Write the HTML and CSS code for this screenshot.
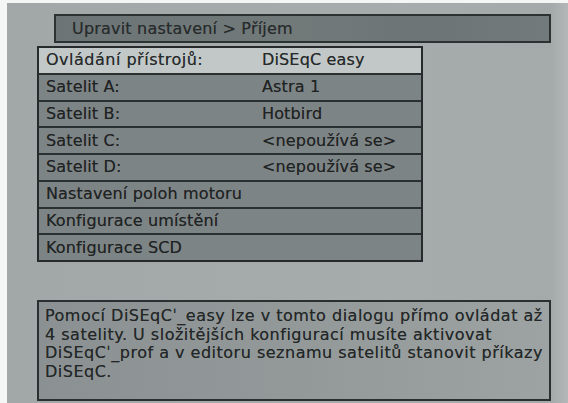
FILE: index.html
```html
<!DOCTYPE html>
<html lang="cs">
<head>
<meta charset="utf-8">
<title>Upravit nastavení &gt; Příjem</title>
<link rel="stylesheet" href="styles.css">
</head>
<body>
<div class="screen">
  <div class="title-bar">Upravit nastavení &gt; Příjem</div>
  <div class="menu">
    <div class="row selected"><span class="label wide">Ovládání přístrojů:</span><span class="value">DiSEqC easy</span></div>
    <div class="row"><span class="label">Satelit A:</span><span class="value">Astra 1</span></div>
    <div class="row"><span class="label">Satelit B:</span><span class="value">Hotbird</span></div>
    <div class="row"><span class="label">Satelit C:</span><span class="value">&lt;nepoužívá se&gt;</span></div>
    <div class="row"><span class="label">Satelit D:</span><span class="value">&lt;nepoužívá se&gt;</span></div>
    <div class="row"><span class="label">Nastavení poloh motoru</span></div>
    <div class="row"><span class="label">Konfigurace umístění</span></div>
    <div class="row"><span class="label">Konfigurace SCD</span></div>
  </div>
  <div class="help">Pomocí DiSEqCˈ_easy lze v tomto dialogu přímo ovládat až 4 satelity. U složitějších konfigurací musíte aktivovat DiSEqCˈ_prof a v editoru seznamu satelitů stanovit příkazy DiSEqC.</div>
</div>
</body>
</html>
```

FILE: styles.css
```css
html, body {
  margin: 0;
  padding: 0;
  background: #f4f5f5;
}

body {
  font-family: "DejaVu Sans", "Liberation Sans", sans-serif;
  font-size: 16px;
  color: #1f2323;
}

.screen {
  margin: 3px 0 0 7px;
  height: 400px;
  box-sizing: border-box;
  padding: 11px 17px 0 30px;
  background: linear-gradient(90deg, #a2a7a7 0%, #a6abab 70%, #a4a9a9 97%, #b3b7b7 100%);
  display: flex;
  flex-direction: column;
}

.title-bar {
  margin-left: 17px;
  height: 25px;
  border: 2px solid #2c3132;
  background: linear-gradient(90deg, #6d7475 0%, #727979 50%, #6c7476 75%, #737a7b 100%);
  color: #272c2d;
  line-height: 25px;
  padding-left: 16px;
  letter-spacing: 0.2px;
  text-shadow: 0 0 0.5px rgba(30, 34, 35, 0.6);
}

.menu {
  margin-top: 3px;
  width: 382px;
  border: 2px solid #262a2b;
  background: #2a2f30;
  display: flex;
  flex-direction: column;
  gap: 2px;
}

.row {
  height: 24.75px;
  display: grid;
  grid-template-columns: 216px 1fr;
  align-items: center;
  padding-left: 7px;
  background: #7d8485;
  line-height: 1;
  letter-spacing: 0.15px;
  text-shadow: 0 0 0.5px rgba(30, 34, 35, 0.6);
}

.label.wide {
  letter-spacing: 0.5px;
}

.row.selected {
  background: #c2c7c7;
  color: #262a2a;
}

.help {
  margin-top: 38px;
  height: 92px;
  border: 2px solid #2a2f30;
  background: linear-gradient(90deg, #8b9192 0%, #939999 50%, #9da2a2 100%);
  padding: 5px 3px 0 6px;
  line-height: 18.7px;
  color: #232727;
  letter-spacing: 0.5px;
  text-shadow: 0 0 0.5px rgba(30, 34, 35, 0.6);
}
```
